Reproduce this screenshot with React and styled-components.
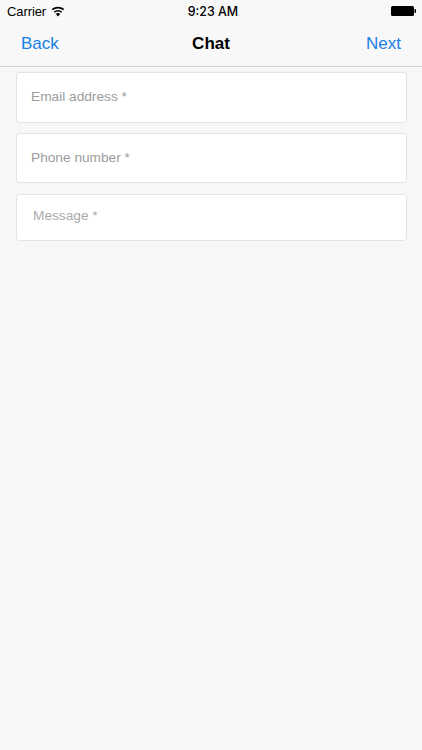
import React from "react";
import styled, { createGlobalStyle } from "styled-components";

const GlobalStyle = createGlobalStyle`
  html, body {
    margin: 0;
    padding: 0;
    background: #f7f7f7;
    font-family: "Liberation Sans", sans-serif;
  }
  * {
    box-sizing: border-box;
  }
`;

const Screen = styled.div`
  width: 422px;
  height: 750px;
  overflow: hidden;
  background: #f7f7f7;
`;

const Header = styled.header`
  height: 67px;
  background: #f8f8f8;
  border-bottom: 1px solid #d4d4d4;
`;

const StatusBar = styled.div`
  height: 21px;
  padding: 1px 6px 0 7px;
  display: grid;
  grid-template-columns: 1fr auto 1fr;
  align-items: center;
  color: #000;
`;

const StatusLeft = styled.div`
  display: flex;
  align-items: center;
  gap: 5px;
  font-size: 13px;
  letter-spacing: -0.1px;
`;

const StatusTime = styled.div`
  margin-left: 3px;
  font-family: "Inter", "Liberation Sans", sans-serif;
  font-size: 12.4px;
  font-weight: 500;
`;

const StatusRight = styled.div`
  display: flex;
  justify-content: flex-end;
`;

const NavBar = styled.nav`
  height: 44px;
  padding: 1px 21px 0;
  display: grid;
  grid-template-columns: 1fr auto 1fr;
  align-items: center;
`;

const NavButton = styled.button`
  padding: 0;
  border: none;
  background: none;
  font-family: inherit;
  font-size: 17px;
  color: #1a7fe4;
  text-align: ${(props) => props.$align};
`;

const Title = styled.h1`
  margin: 0;
  font-size: 17px;
  font-weight: 700;
  color: #000;
`;

const Form = styled.form`
  padding: 5px 15px 0 16px;
  display: flex;
  flex-direction: column;
`;

const Field = styled.div`
  height: ${(props) => props.$height}px;
  margin-bottom: ${(props) => props.$gap}px;
  padding-left: ${(props) => props.$inset}px;
  padding-bottom: ${(props) => props.$lift}px;
  display: flex;
  align-items: center;
  background: #fff;
  border: 1px solid #e4e4e4;
  border-radius: 3px;
  font-size: 13.7px;
  color: ${(props) => props.$color};
`;

const WifiIcon = () => (
  <svg width="14" height="11" viewBox="0 0 14 11">
    <path
      d="M7 10.5 4.9 8a3.2 3.2 0 0 1 4.2 0z M3.9 6.8 2.8 5.5a6.4 6.4 0 0 1 8.4 0l-1.1 1.3a4.7 4.7 0 0 0-6.2 0z M1.8 4.3.7 3a9.700 9.700 0 0 1 12.600 0l-1.100 1.300a8 8 0 0 0-10.400 0z"
      fill="#000"
    />
  </svg>
);

const BatteryIcon = () => (
  <svg width="25" height="10" viewBox="0 0 25 10">
    <rect x="0" y="0" width="23" height="10" rx="1.5" fill="#000" />
    <rect x="23.500" y="3" width="1.500" height="4" rx="0.700" fill="#000" />
  </svg>
);

export default function App() {
  return (
    <Screen>
      <GlobalStyle />
      <Header>
        <StatusBar>
          <StatusLeft>
            Carrier
            <WifiIcon />
          </StatusLeft>
          <StatusTime>9:23 AM</StatusTime>
          <StatusRight>
            <BatteryIcon />
          </StatusRight>
        </StatusBar>
        <NavBar>
          <NavButton type="button" $align="left">Back</NavButton>
          <Title>Chat</Title>
          <NavButton type="button" $align="right">Next</NavButton>
        </NavBar>
      </Header>
      <Form>
        <Field $height={51} $gap={10} $inset={14} $lift={2} $color="#9c9c9c">Email address *</Field>
        <Field $height={50} $gap={11} $inset={14} $lift={1} $color="#9c9c9c">Phone number *</Field>
        <Field $height={47} $gap={0} $inset={16} $lift={4} $color="#aaa">Message *</Field>
      </Form>
    </Screen>
  );
}
